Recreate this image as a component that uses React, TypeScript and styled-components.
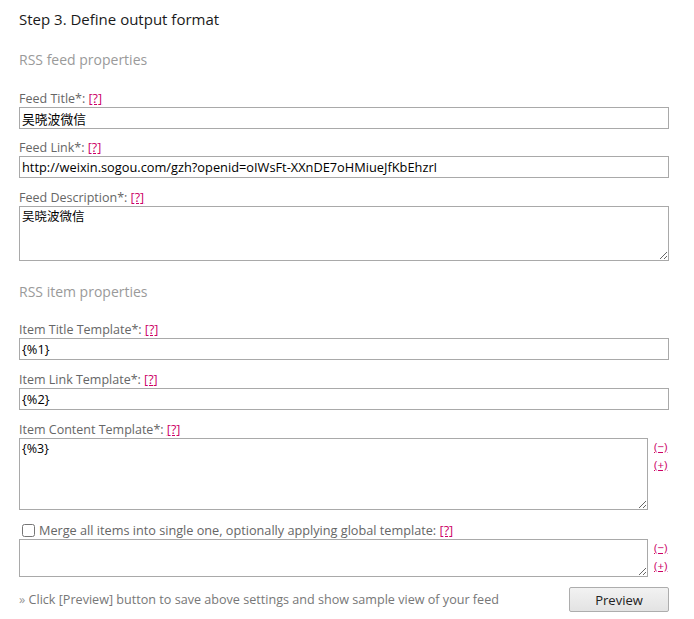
import React from "react"
import styled, { createGlobalStyle } from "styled-components"

const GlobalStyle = createGlobalStyle`
  html, body {
    margin: 0;
    padding: 0;
    background: #fff;
  }
  body {
    font-family: "Open Sans", "Noto Sans CJK SC", sans-serif;
    font-size: 13px;
  }
`

const Page = styled.div`
  width: 650px;
  padding: 9px 25px 0 19px;
`

const Title = styled.h3`
  margin: 0;
  height: 20px;
  font-size: 15px;
  font-weight: normal;
  line-height: 20px;
  color: #1a1a1a;
`

const SectionTitle = styled.h4`
  margin: 21px 0 0;
  height: 20px;
  font-size: 14px;
  font-weight: normal;
  line-height: 20px;
  color: #9a9a9a;
`

const Field = styled.div<{ $gap?: number }>`
  margin-top: ${(p) => (p.$gap ?? 12)}px;
`

const Label = styled.label`
  display: block;
  height: 16px;
  font-size: 12.5px;
  line-height: 16px;
  color: #666;
  white-space: nowrap;
`

const Help = styled.a`
  color: #cc0066;
  text-decoration: underline;
  cursor: pointer;
`

const TextInput = styled.input`
  display: block;
  box-sizing: border-box;
  width: 100%;
  height: 22px;
  margin: 0;
  padding: 0 2px;
  border: 1px solid #a9a9a9;
  font-family: "Open Sans", "Noto Sans CJK SC", sans-serif;
  font-size: 12.8px;
  color: #000;
  outline: none;
`

const TextArea = styled.textarea<{ $h: number }>`
  display: block;
  box-sizing: border-box;
  width: 100%;
  height: ${(p) => p.$h}px;
  margin: 0;
  padding: 2px 2px;
  border: 1px solid #a9a9a9;
  font-family: "Open Sans", "Noto Sans CJK SC", sans-serif;
  font-size: 12.5px;
  line-height: 16px;
  color: #000;
  resize: vertical;
  outline: none;
`

const AreaRow = styled.div<{ $gap?: number }>`
  display: flex;
  align-items: flex-start;
  gap: 6px;
  margin-top: ${(p) => (p.$gap ?? 0)}px;
`

const AreaBox = styled.div`
  width: 629px;
  flex: none;
`

const SideLinks = styled.div`
  display: flex;
  flex-direction: column;
  padding-top: 0;
  font-size: 11.5px;
  line-height: 18px;
`

const CheckRow = styled.label`
  display: flex;
  align-items: center;
  margin-top: 12px;
  padding-left: 3px;
  height: 16px;
  font-size: 12.7px;
  color: #666;
  gap: 4px;
  white-space: nowrap;
`

const Check = styled.input`
  width: 13px;
  height: 13px;
  margin: 0;
  flex: none;
`

const Footer = styled.div`
  display: flex;
  align-items: center;
  justify-content: space-between;
  margin-top: 10px;
  height: 25px;
  font-size: 12.6px;
  color: #777;
  white-space: nowrap;
`

const Raquo = styled.span`
  color: #999;
`

const Button = styled.button`
  width: 100px;
  height: 25px;
  border: 1px solid #adadad;
  border-radius: 2px;
  background: linear-gradient(#f2f2f2, #e3e3e3);
  font-family: "Open Sans", sans-serif;
  font-size: 13px;
  color: #222;
  padding: 0;
`

const qm = <Help>[?]</Help>

export default function App() {
  return (
    <Page>
      <GlobalStyle />
      <Title>Step 3. Define output format</Title>
      <SectionTitle>RSS feed properties</SectionTitle>

      <Field $gap={21}>
        <Label>Feed Title*: {qm}</Label>
        <TextInput defaultValue="吴晓波微信" />
      </Field>
      <Field $gap={11}>
        <Label>Feed Link*: {qm}</Label>
        <TextInput defaultValue="http://weixin.sogou.com/gzh?openid=oIWsFt-XXnDE7oHMiueJfKbEhzrI" />
      </Field>
      <Field>
        <Label>Feed Description*: {qm}</Label>
        <TextArea $h={55} defaultValue="吴晓波微信" />
      </Field>

      <SectionTitle>RSS item properties</SectionTitle>

      <Field $gap={20}>
        <Label>Item Title Template*: {qm}</Label>
        <TextInput defaultValue="{%1}" />
      </Field>
      <Field>
        <Label>Item Link Template*: {qm}</Label>
        <TextInput defaultValue="{%2}" />
      </Field>
      <Field>
        <Label>Item Content Template*: {qm}</Label>
        <AreaRow>
          <AreaBox>
            <TextArea $h={72} defaultValue="{%3}" />
          </AreaBox>
          <SideLinks>
            <Help>(−)</Help>
            <Help>(+)</Help>
          </SideLinks>
        </AreaRow>
      </Field>

      <CheckRow>
        <Check type="checkbox" />
        <span>Merge all items into single one, optionally applying global template: {qm}</span>
      </CheckRow>
      <AreaRow $gap={1}>
        <AreaBox>
          <TextArea $h={38} defaultValue="" />
        </AreaBox>
        <SideLinks>
          <Help>(−)</Help>
          <Help>(+)</Help>
        </SideLinks>
      </AreaRow>

      <Footer>
        <span>
          <Raquo>»</Raquo> Click [Preview] button to save above settings and show sample view of your feed
        </span>
        <Button>Preview</Button>
      </Footer>
    </Page>
  )
}
